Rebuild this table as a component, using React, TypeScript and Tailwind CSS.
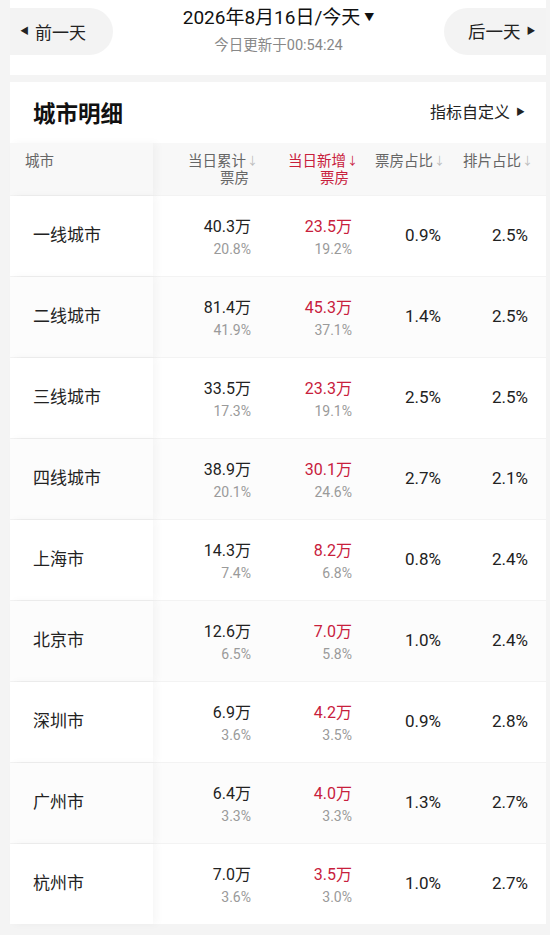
import React from "react";

const rows: string[][] = [
  ["一线城市", "40.3万", "20.8%", "23.5万", "19.2%", "0.9%", "2.5%"],
  ["二线城市", "81.4万", "41.9%", "45.3万", "37.1%", "1.4%", "2.5%"],
  ["三线城市", "33.5万", "17.3%", "23.3万", "19.1%", "2.5%", "2.5%"],
  ["四线城市", "38.9万", "20.1%", "30.1万", "24.6%", "2.7%", "2.1%"],
  ["上海市", "14.3万", "7.4%", "8.2万", "6.8%", "0.8%", "2.4%"],
  ["北京市", "12.6万", "6.5%", "7.0万", "5.8%", "1.0%", "2.4%"],
  ["深圳市", "6.9万", "3.6%", "4.2万", "3.5%", "0.9%", "2.8%"],
  ["广州市", "6.4万", "3.3%", "4.0万", "3.3%", "1.3%", "2.7%"],
  ["杭州市", "7.0万", "3.6%", "3.5万", "3.0%", "1.0%", "2.7%"],
];

export default function App() {
  return (
    <div className="w-[550px] h-[935px] overflow-hidden bg-[#f4f4f4] font-['Roboto','Noto_Sans_CJK_SC',sans-serif] text-[#222]">
      {/* top date bar */}
      <div className="ml-[10px] mr-[4px] h-[75px] bg-white flex items-start justify-between">
        <div className="mt-[8px] h-[47px] w-[103px] rounded-r-full bg-[#f3f3f3] flex items-center pl-[10px]">
          <span className="text-[9px] text-[#222] mr-[6px]">◀</span>
          <span className="text-[17px] text-[#222] font-['Noto_Sans_CJK_SC',sans-serif]">前一天</span>
        </div>
        <div className="flex flex-col items-center pt-[4px]">
          <div className="flex items-center text-[19px] leading-[28px] text-[#111]">
            <span>2026年8月16日/今天</span>
            <span className="text-[10px] ml-[4px]">▼</span>
          </div>
          <div className="text-[14.5px] leading-[18px] mt-[5px] text-[#888]">今日更新于00:54:24</div>
        </div>
        <div className="mt-[8px] h-[47px] w-[102px] rounded-l-full bg-[#f3f3f3] flex items-center pl-[24px]">
          <span className="text-[17.5px] text-[#222] font-['Noto_Sans_CJK_SC',sans-serif]">后一天</span>
          <span className="text-[9px] text-[#222] ml-[6px]">▶</span>
        </div>
      </div>

      {/* card */}
      <div className="ml-[10px] mr-[4px] mt-[7px] bg-white">
        <div className="h-[61px] flex items-center justify-between pl-[23px] pr-[21px]">
          <span className="text-[22.5px] font-bold text-[#111] font-['Noto_Sans_CJK_SC',sans-serif]">城市明细</span>
          <div className="flex items-center text-[16px] text-[#222]">
            <span>指标自定义</span>
            <span className="text-[9px] ml-[6px]">▶</span>
          </div>
        </div>

        {/* header row */}
        <div className="grid grid-cols-[143px_109px_100px_88px_96px] h-[52px] bg-[#f8f8f8] text-[14.5px] leading-[17px] text-[#666]">
          <div className="pl-[15px] pt-[10px] relative z-10 bg-[#f8f8f8] shadow-[4px_0_8px_rgba(0,0,0,0.035)]">城市</div>
          <div className="flex flex-col items-end pt-[10px] pr-[4px]">
            <div className="flex items-center">当日累计<span className="text-[11px] text-[#bbb] ml-[1px]">↓</span></div>
            <div className="pr-[9px]">票房</div>
          </div>
          <div className="flex flex-col items-end pt-[10px] pr-[4px] text-[#c8203c]">
            <div className="flex items-center">当日新增<span className="text-[11px] ml-[1px]">↓</span></div>
            <div className="pr-[9px]">票房</div>
          </div>
          <div className="flex flex-col items-end pt-[10px] pr-[5px]">
            <div className="flex items-center">票房占比<span className="text-[11px] text-[#bbb] ml-[1px]">↓</span></div>
          </div>
          <div className="flex flex-col items-end pt-[10px] pr-[13px]">
            <div className="flex items-center">排片占比<span className="text-[11px] text-[#bbb] ml-[1px]">↓</span></div>
          </div>
        </div>

        {/* rows */}
        {rows.map((r, i) => (
          <div
            key={r[0]}
            className={`grid grid-cols-[143px_109px_100px_88px_96px] h-[81px] border-t border-[#f3f3f3] ${i % 2 === 1 ? "bg-[#fcfcfc]" : "bg-white"}`}
          >
            <div className={`flex items-center pl-[23px] text-[17px] text-[#222] relative z-10 shadow-[4px_0_8px_rgba(0,0,0,0.035)] ${i % 2 === 1 ? "bg-[#fcfcfc]" : "bg-white"}`}>
              {r[0]}
            </div>
            <div className="flex flex-col items-end justify-center pt-[3px] pr-[11px]">
              <div className="text-[16px] leading-[22px] text-[#222]">{r[1]}</div>
              <div className="text-[14px] leading-[22px] text-[#9a9a9a]">{r[2]}</div>
            </div>
            <div className="flex flex-col items-end justify-center pt-[3px] pr-[10px]">
              <div className="text-[16px] leading-[22px] text-[#c8203c]">{r[3]}</div>
              <div className="text-[14px] leading-[22px] text-[#9a9a9a]">{r[4]}</div>
            </div>
            <div className="flex items-center justify-end pr-[9px] text-[17px] text-[#222]">{r[5]}</div>
            <div className="flex items-center justify-end pr-[18px] text-[17px] text-[#222]">{r[6]}</div>
          </div>
        ))}
      </div>
    </div>
  );
}
